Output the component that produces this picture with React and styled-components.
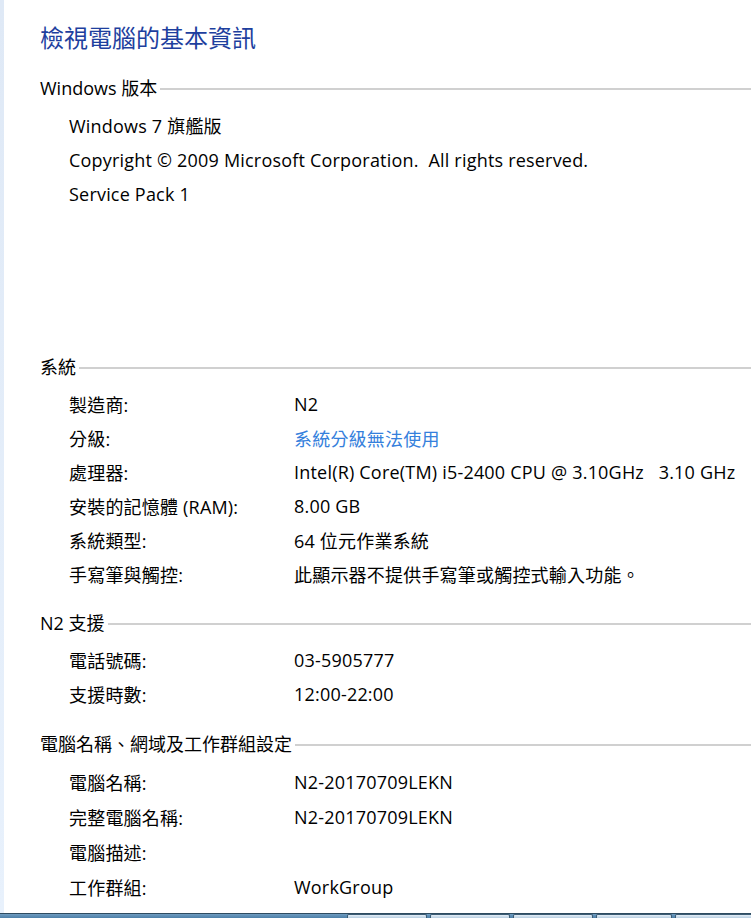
import styled, { createGlobalStyle } from 'styled-components'

const GlobalStyle = createGlobalStyle`
  html, body {
    margin: 0;
    padding: 0;
    background: #fff;
  }
  body {
    font-family: "Open Sans", "Noto Sans CJK TC", sans-serif;
    color: #000;
  }
`

const Window = styled.div`
  width: 751px;
  height: 918px;
  display: flex;
  flex-direction: column;
  overflow: hidden;
  background: #fff;
`

const Body = styled.div`
  flex: 1;
  display: flex;
  min-height: 0;
`

const Strip = styled.div`
  width: 4px;
  background: linear-gradient(180deg, #dfe9f6 0%, #e8f1fc 100%);
`

const Content = styled.div`
  flex: 1;
  padding: 21px 0 0 36px;
  display: flex;
  flex-direction: column;
`

const Title = styled.h1`
  margin: 0 0 23px;
  font-size: 24px;
  line-height: 31px;
  font-weight: 400;
  color: #1e3f9e;
  font-family: "Noto Sans CJK TC", sans-serif;
`

const Section = styled.section`
  display: flex;
  flex-direction: column;
  margin-bottom: ${p => p.$gap ?? 20}px;
`

const Header = styled.div`
  display: flex;
  align-items: center;
  height: 24px;
  font-size: 18px;
  gap: 3px;
  white-space: nowrap;

  &::after {
    content: '';
    flex: 1;
    height: 2px;
    margin-top: 3px;
    background: #d0d0d0;
  }
`

const Rows = styled.div`
  display: flex;
  flex-direction: column;
  padding: 9px 0 0 29px;
  min-height: ${p => p.$minHeight || 0}px;
`

const Row = styled.div`
  display: grid;
  grid-template-columns: ${p => (p.$single ? '1fr' : '225px 1fr')};
  height: ${p => p.$h || 34}px;
  align-items: center;
  font-size: 18px;
  letter-spacing: 0.2px;
  white-space: nowrap;
`

const Value = styled.span`
  color: ${p => (p.$link ? '#3580dc' : '#000')};
`

const Taskbar = styled.div`
  height: 4px;
  flex-shrink: 0;
  display: flex;
  border-top: 1px solid #2e4b60;
  background: linear-gradient(180deg, #6f9cc0 0%, #4d7fa8 100%);
`

const TaskSpacer = styled.div`
  width: 347px;
  flex-shrink: 0;
`

const TaskButton = styled.div`
  width: ${p => p.$w}px;
  flex-shrink: 0;
  flex-grow: ${p => (p.$last ? 1 : 0)};
  margin-right: ${p => (p.$last ? 0 : 3)}px;
  border: 1px solid #3c5c74;
  border-bottom: none;
  border-radius: 2px 2px 0 0;
  background: linear-gradient(180deg, #e4eef7 0%, #b6cde0 100%);
`

function InfoRow({ label, value, link, h }) {
  return (
    <Row $h={h}>
      <span>{label}</span>
      <Value $link={link}>{value}</Value>
    </Row>
  )
}

export default function App() {
  return (
    <Window>
      <GlobalStyle />
      <Body>
        <Strip />
        <Content>
          <Title>檢視電腦的基本資訊</Title>

          <Section>
            <Header>Windows 版本</Header>
            <Rows $minHeight={226}>
              <Row $single $h={34.5}>Windows 7 旗艦版</Row>
              <Row $single $h={34.5}>Copyright © 2009 Microsoft Corporation.&nbsp; All rights reserved.</Row>
              <Row $single $h={34.5}>Service Pack 1</Row>
            </Rows>
          </Section>

          <Section $gap={19}>
            <Header>系統</Header>
            <Rows>
              <InfoRow label="製造商:" value="N2" />
              <InfoRow label="分級:" value="系統分級無法使用" link />
              <InfoRow label="處理器:" value={'Intel(R) Core(TM) i5-2400 CPU @ 3.10GHz\u00a0\u00a0\u00a03.10 GHz'} />
              <InfoRow label="安裝的記憶體 (RAM):" value="8.00 GB" />
              <InfoRow label="系統類型:" value="64 位元作業系統" />
              <InfoRow label="手寫筆與觸控:" value="此顯示器不提供手寫筆或觸控式輸入功能。" />
            </Rows>
          </Section>

          <Section>
            <Header>N2 支援</Header>
            <Rows>
              <InfoRow label="電話號碼:" value="03-5905777" />
              <InfoRow label="支援時數:" value="12:00-22:00" />
            </Rows>
          </Section>

          <Section>
            <Header>電腦名稱、網域及工作群組設定</Header>
            <Rows>
              <InfoRow h={35} label="電腦名稱:" value="N2-20170709LEKN" />
              <InfoRow h={35} label="完整電腦名稱:" value="N2-20170709LEKN" />
              <InfoRow h={35} label="電腦描述:" value="" />
              <InfoRow h={35} label="工作群組:" value="WorkGroup" />
            </Rows>
          </Section>
        </Content>
      </Body>
      <Taskbar>
        <TaskSpacer />
        <TaskButton $w={78} />
        <TaskButton $w={78} />
        <TaskButton $w={78} />
        <TaskButton $w={74} />
        <TaskButton $w={78} $last />
      </Taskbar>
    </Window>
  )
}
